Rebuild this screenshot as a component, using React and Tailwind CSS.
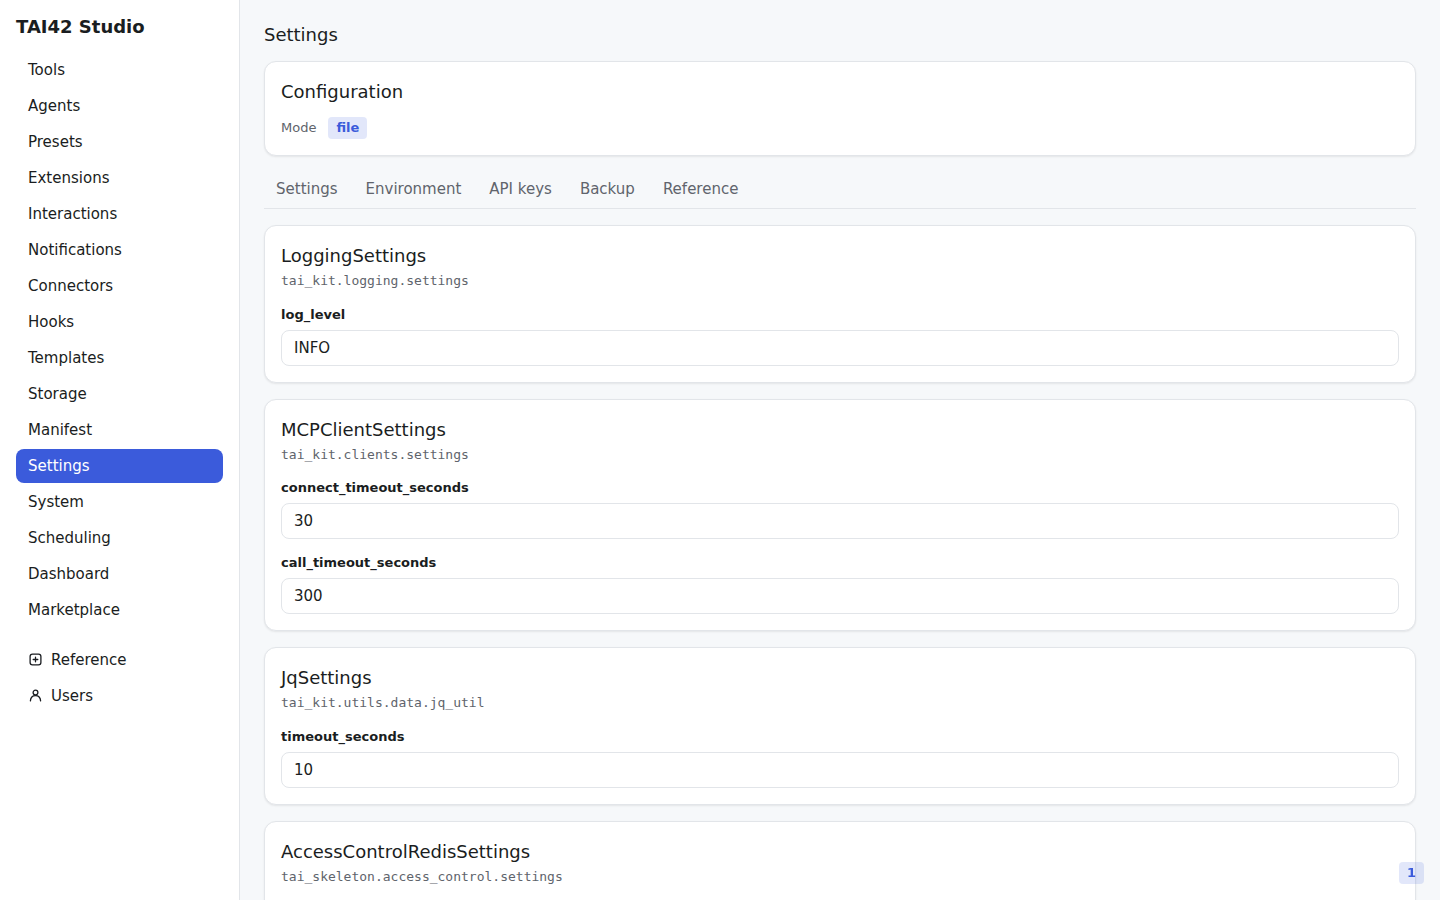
const navItems = [
  "Tools",
  "Agents",
  "Presets",
  "Extensions",
  "Interactions",
  "Notifications",
  "Connectors",
  "Hooks",
  "Templates",
  "Storage",
  "Manifest",
  "Settings",
  "System",
  "Scheduling",
  "Dashboard",
  "Marketplace",
];

const tabs = ["Settings", "Environment", "API keys", "Backup", "Reference"];

const settingsGroups = [
  {
    name: "LoggingSettings",
    module: "tai_kit.logging.settings",
    fields: [{ name: "log_level", value: "INFO" }],
  },
  {
    name: "MCPClientSettings",
    module: "tai_kit.clients.settings",
    fields: [
      { name: "connect_timeout_seconds", value: "30" },
      { name: "call_timeout_seconds", value: "300" },
    ],
  },
  {
    name: "JqSettings",
    module: "tai_kit.utils.data.jq_util",
    fields: [{ name: "timeout_seconds", value: "10" }],
  },
  {
    name: "AccessControlRedisSettings",
    module: "tai_skeleton.access_control.settings",
    fields: [],
  },
];

export default function App() {
  return (
    <div className="flex h-screen overflow-hidden bg-[#f6f8fa] font-['DejaVu_Sans',sans-serif] text-[15px] text-[#1a1d21]">
      <Sidebar active="Settings" />

      <main className="flex min-w-0 flex-1 flex-col gap-4 overflow-hidden p-6">
        <h1 className="shrink-0 text-lg leading-[21px]">Settings</h1>

        <Card>
          <h2 className="text-lg leading-[27px]">Configuration</h2>
          <div className="mt-3 flex items-center gap-3">
            <span className="text-[13px] leading-[22px] text-[#60646c]">Mode</span>
            <Badge>file</Badge>
          </div>
        </Card>

        <div className="flex h-[37px] shrink-0 gap-1 border-b border-[#e2e5e9]">
          {tabs.map((tab) => (
            <button
              key={tab}
              type="button"
              className="px-3 pb-[3px] text-[15px] leading-[18px] text-[#60646c]"
            >
              {tab}
            </button>
          ))}
        </div>

        {settingsGroups.map((group) => (
          <SettingsCard key={group.name} group={group} />
        ))}
      </main>

      <div className="fixed bottom-4 right-4">
        <Badge>1</Badge>
      </div>
    </div>
  );
}

function Sidebar({ active }) {
  return (
    <aside className="flex w-60 shrink-0 flex-col gap-4 border-r border-[#e2e5e9] bg-white p-4">
      <div className="text-lg font-bold leading-[21px]">TAI42 Studio</div>

      <nav className="flex flex-col gap-0.5">
        {navItems.map((item) => (
          <a
            key={item}
            className={`flex h-[34px] items-center rounded-lg px-3 ${
              item === active ? "bg-[#3b5bdb] text-white" : ""
            }`}
          >
            {item}
          </a>
        ))}
      </nav>

      <nav className="flex flex-col gap-0.5">
        <a className="flex h-[34px] items-center gap-2 px-3">
          <ReferenceIcon />
          Reference
        </a>
        <a className="flex h-[34px] items-center gap-2 px-3">
          <UserIcon />
          Users
        </a>
      </nav>
    </aside>
  );
}

function Card({ children }) {
  return (
    <section className="shrink-0 rounded-xl border border-[#e2e5e9] bg-white p-4 shadow-[0_1px_2px_rgba(0,0,0,0.08)]">
      {children}
    </section>
  );
}

function Badge({ children }) {
  return (
    <span className="block rounded-[4px] bg-[#3b5bdb]/15 px-2 text-[13px] font-bold leading-[22px] text-[#3b5bdb]">
      {children}
    </span>
  );
}

function SettingsCard({ group }) {
  return (
    <Card>
      <h2 className="text-lg leading-[27px]">{group.name}</h2>
      <p className="mt-1 font-['DejaVu_Sans_Mono',monospace] text-[13px] leading-[15px] text-[#60646c]">
        {group.module}
      </p>

      <div className="mt-[18.5px] flex flex-col gap-4">
        {group.fields.map((field) => (
          <label key={field.name} className="flex flex-col gap-2">
            <span className="text-[13px] font-bold leading-[15px]">
              {field.name}
            </span>
            <input
              readOnly
              value={field.value}
              className="h-9 w-full rounded-lg border border-[#e2e5e9] bg-white px-3 text-[15px] outline-none"
            />
          </label>
        ))}
      </div>
    </Card>
  );
}

function ReferenceIcon() {
  return (
    <svg
      className="mb-px"
      width="15"
      height="15"
      viewBox="0 0 15 15"
      fill="none"
      stroke="currentColor"
      strokeWidth="1.3"
      strokeLinecap="round"
    >
      <rect x="2.1" y="2.1" width="10.8" height="10.8" rx="2.4" />
      <path d="M7.5 5.2v4.6M5.2 7.5h4.6" />
    </svg>
  );
}

function UserIcon() {
  return (
    <svg
      className="mb-px"
      width="15"
      height="15"
      viewBox="0 0 15 15"
      fill="none"
      stroke="currentColor"
      strokeWidth="1.3"
      strokeLinecap="round"
    >
      <circle cx="7.5" cy="4.6" r="2.4" />
      <path d="M2.4 12.9c.2-3.4 2.2-5.3 5.1-5.3s4.9 1.9 5.1 5.3" />
    </svg>
  );
}
